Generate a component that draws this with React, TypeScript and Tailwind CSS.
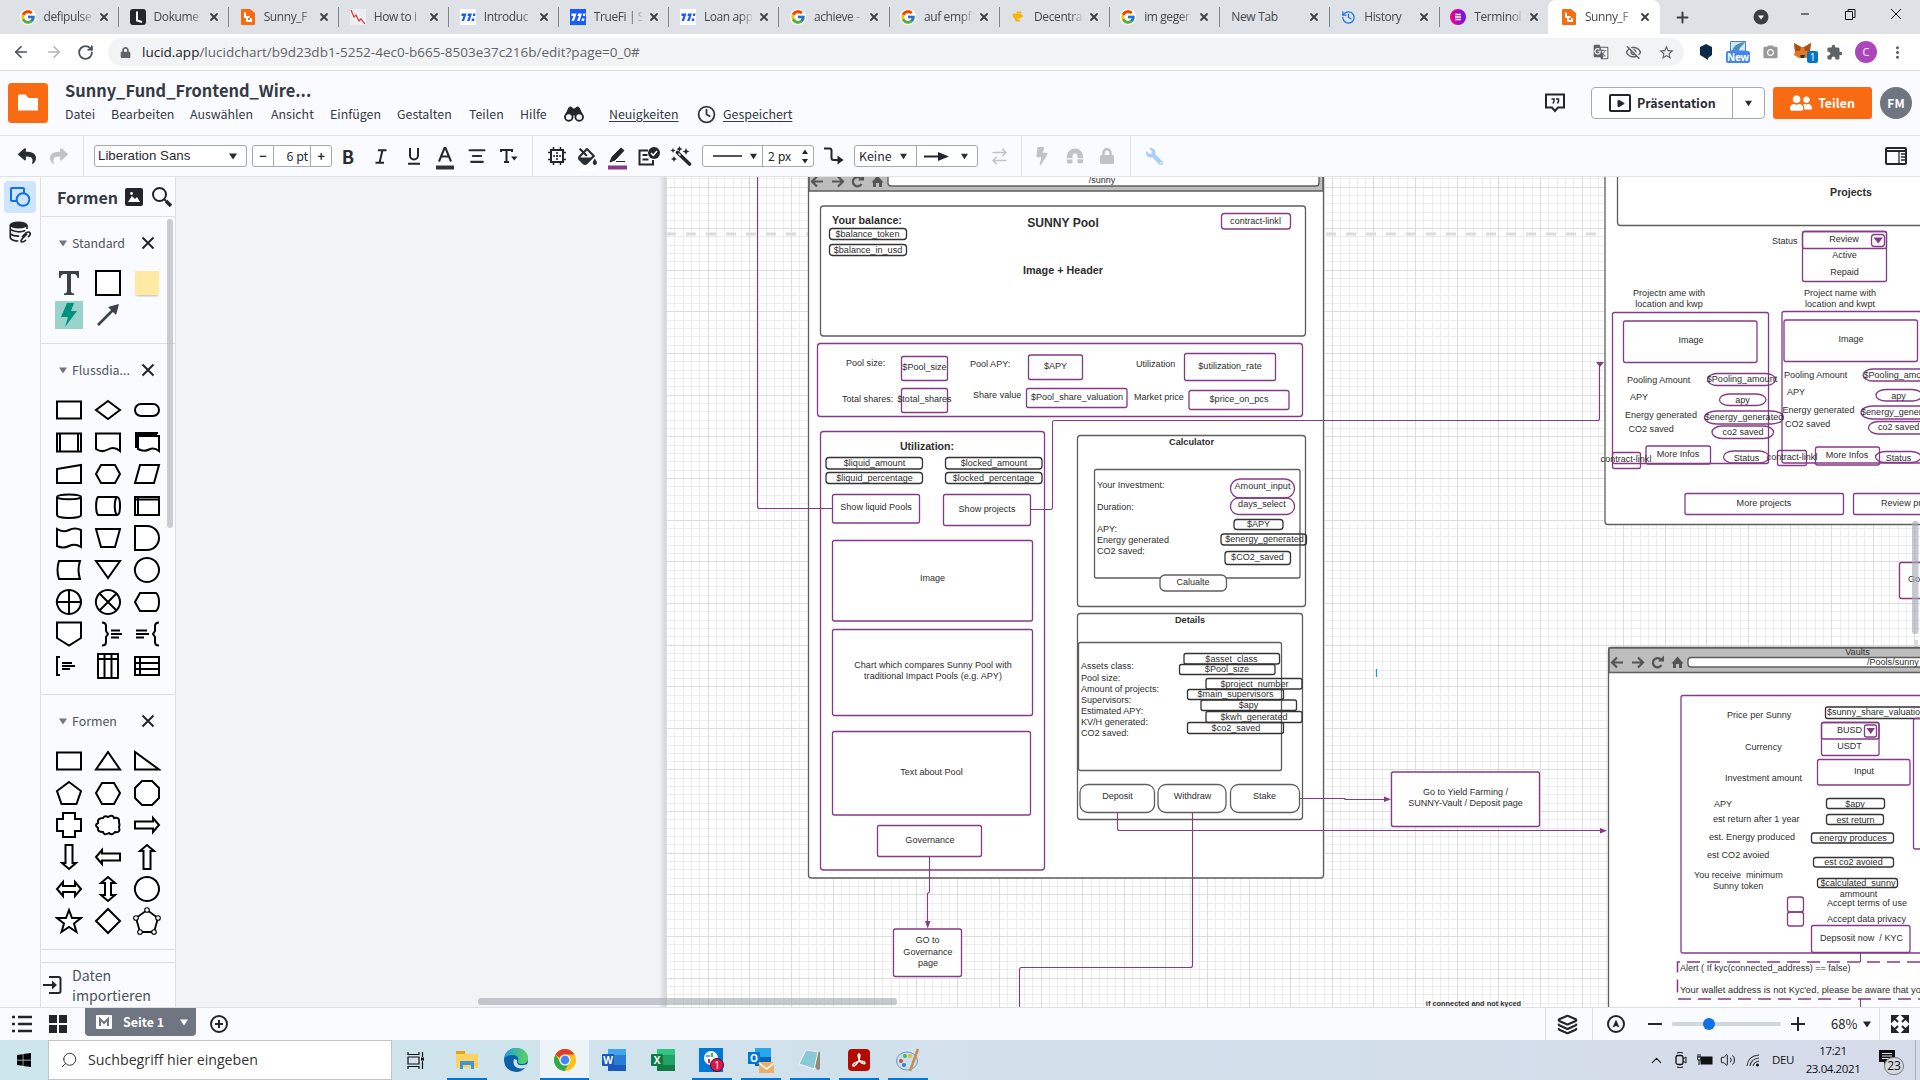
import React from "react";
import {
  FaBolt, FaLock, FaMagnet, FaWrench, FaReply, FaShare, FaFillDrip, FaUserFriends, FaWindows,
} from "react-icons/fa";
import { MdGTranslate, MdOutlineVisibilityOff, MdStarBorder, MdExtension, MdPhotoCamera, MdMoreVert } from "react-icons/md";
import { FcGoogle } from "react-icons/fc";
import {
  ArrowLeft, ArrowRight, RotateCw, History, Plus, X, Minus, Clock, AlignCenter, Layers, ArrowRightLeft,
  Search, ChevronUp, Volume2, Play,
} from "lucide-react";

const PURPLE = "#853a87";
const GRAY = "#5e5e5e";
const DARK = "#333333";

/* ---------- browser tabs ---------- */

const Lucid = () => (
  <svg width="14" height="16" viewBox="0 0 14 16"><path d="M1 0h8l5 4v11a1 1 0 0 1-1 1H1a1 1 0 0 1-1-1V1a1 1 0 0 1 1-1z" fill="#f96b13" /><path d="M4 3.500v4.500h4.500M6 8.500V12h4V9" fill="none" stroke="#fff" strokeWidth="2" /></svg>
);
const TrueFi = ({ dark }: { dark?: boolean }) => (
  <svg width="16" height="16" viewBox="0 0 16 16">
    <rect width="16" height="16" fill={dark ? "#1a5aff" : "#fff"} />
    <path d="M1.500 4.500h5L4 12H1.500L3.500 7H1.500zM8 4.500h4L9.500 12H7L9 7H7.500zM13 4.500h2.500L15 7h-2zM12 9.500h2.500l-.5 2.500h-2.500z" fill={dark ? "#fff" : "#1a5aff"} />
  </svg>
);
const Google = () => <FcGoogle size={16} className="rounded-full bg-white" />;
const tabs: { label: string; icon?: React.ReactNode }[] = [
  { label: "defipulse", icon: <Google /> },
  { label: "Dokume", icon: <svg width="16" height="16" viewBox="0 0 16 16"><rect width="16" height="16" rx="3" fill="#23262b" /><path d="M7 2.500v9l5 1.500" fill="none" stroke="#fff" strokeWidth="2" /></svg> },
  { label: "Sunny_F", icon: <Lucid /> },
  { label: "How to i", icon: <svg width="16" height="16" viewBox="0 0 16 16"><rect width="16" height="16" fill="#eceff1" /><path d="M1 1l3 7 2-2 3 6 2-2 4 5" fill="none" stroke="#d33" strokeWidth="1.200" /></svg> },
  { label: "Introduc", icon: <TrueFi /> },
  { label: "TrueFi | S", icon: <TrueFi dark /> },
  { label: "Loan app", icon: <TrueFi /> },
  { label: "achieve -", icon: <Google /> },
  { label: "auf empf", icon: <Google /> },
  { label: "Decentra", icon: <svg width="16" height="16" viewBox="0 0 16 16"><path d="M3 5h6l4 2-3 2H4zM5 9l5 3H6zM7 3h4v1H7z" fill="#f7b500" stroke="#f7b500" /></svg> },
  { label: "im geger", icon: <Google /> },
  { label: "New Tab" },
  { label: "History", icon: <History size={15} color="#1a73e8" /> },
  { label: "Terminol", icon: <svg width="16" height="16" viewBox="0 0 16 16"><defs><linearGradient id="tm"><stop offset="0" stopColor="#f0047f" /><stop offset="1" stopColor="#6a11f5" /></linearGradient></defs><circle cx="8" cy="8" r="8" fill="url(#tm)" /><path d="M5 5.500h6M5 8h6M5 10.500h6" stroke="#fff" strokeWidth="1.300" /></svg> },
];

const TabLabel = ({ text }: { text: string }) => (
  <span className="ml-2 w-[48px] whitespace-nowrap text-[12px] tracking-[-0.4px] text-[#45494d] [mask-image:linear-gradient(to_right,black_75%,transparent_105%)]">{text}</span>
);

function TabStrip() {
  return (
    <div className="flex h-[34px] bg-[#dee1e6] pl-[9px] font-['Open_Sans',sans-serif]">
      {tabs.map((t, i) => (
        <div key={i} className="flex w-[110.070px] shrink-0 items-center pl-[10.500px]">
          {t.icon ? <span className="flex w-4 justify-center">{t.icon}</span> : null}
          {t.icon ? <TabLabel text={t.label} /> : <span className="ml-[1px] w-[71px] text-[12px] tracking-[-0.3px] text-[#45494d]">{t.label}</span>}
          <X size={12} strokeWidth={3.600} className="ml-[6px] text-[#3c4043]" />
          {i < 13 && <span className="ml-auto h-5 w-px bg-[#80868b]" />}
        </div>
      ))}
      <div className="-ml-[2px] flex w-[112px] items-center rounded-t-lg bg-white pl-[13px]">
        <span className="flex w-4 justify-center"><Lucid /></span>
        <TabLabel text="Sunny_F" />
        <X size={12} strokeWidth={3.600} className="ml-[6px] text-[#3c4043]" />
      </div>
      <Plus size={17} strokeWidth={2.800} className="ml-[14px] self-center text-[#3c4043]" />
      <svg width="16" height="16" viewBox="0 0 16 16" className="ml-[62px] self-center"><circle cx="8" cy="8" r="7.500" fill="#3c4043" /><path d="M5 6.500h6l-3 4z" fill="#fff" /></svg>
      <div className="flex h-7 items-center">
        <Minus size={12} strokeWidth={2} className="ml-[30px]" />
        <svg width="11" height="11" viewBox="0 0 11 11" className="ml-[34px]"><path d="M.5 2.500h7v8h-7zM3 2.500v-2h7v8H8" fill="none" stroke="#111" /></svg>
        <svg width="12" height="12" viewBox="0 0 12 12" className="ml-[34px]"><path d="M1 1l10 10M11 1L1 11" stroke="#111" /></svg>
      </div>
    </div>
  );
}

function AddressBar() {
  return (
    <div className="flex h-[37px] items-center border-b border-[#dadce0] bg-white font-['Open_Sans',sans-serif]">
      <div className="flex w-[108px] items-center pl-3">
        <ArrowLeft size={18} strokeWidth={2.300} color="#4d5156" />
        <ArrowRight size={18} strokeWidth={2.300} color="#b4b6b9" className="ml-[15px]" />
        <RotateCw size={17} strokeWidth={2.600} color="#4d5156" className="ml-[14px]" />
      </div>
      <div className="flex h-7 w-[1576px] items-center rounded-full bg-[#f1f3f4]">
        <FaLock size={11} color="#5f6368" className="ml-3" />
        <span className="ml-[11px] w-[520px] whitespace-nowrap text-[13.500px] tracking-[0px] text-[#5f6368]"><span className="text-[#202124]">lucid.app</span>/lucidchart/b9d23db1-5252-4ec0-b665-8503e37c216b/edit?page=0_0#</span>
        <div className="ml-auto flex gap-4 pr-[9px] text-[#5f6368]">
          <MdGTranslate size={16} /><MdOutlineVisibilityOff size={17} /><MdStarBorder size={17} />
        </div>
      </div>
      <div className="flex h-9 flex-1 items-center">
        <svg width="14" height="17" viewBox="0 0 14 17" className="ml-[15px]"><path d="M7 0l6 3v8l-4 3v2l-3-2-5-3V3z" fill="#0a2b46" /></svg>
        <div className="ml-[13px] flex w-6 flex-col items-center">
          <svg width="16" height="10" viewBox="0 0 16 10"><path d="M.5 10V.5h15V10z" fill="#d7e8f2" stroke="#4488b5" /><path d="M2 10c2-6 6-8 13-9-2 4-5 4-6 9z" fill="#4a90be" /></svg>
          <span className="h-[12px] w-6 rounded-[2px] bg-[#4285f4] text-center text-[10px] font-bold leading-[12px] tracking-tight text-white">New</span>
        </div>
        <MdPhotoCamera size={17} color="#999" className="ml-[12px]" />
        <div className="relative ml-[15px] h-5 w-[18px]">
          <svg width="17" height="17" viewBox="0 0 17 17"><path d="M0 1l7 4h3l7-4-1 8 1 4-5 3H5l-5-3 1-4z" fill="#e27625" /><path d="M0 1l7 4-1 4-5 0zM17 1l-7 4 1 4 5 0z" fill="#a8511a" /><path d="M6 13h5l-1 3H7z" fill="#233447" /></svg>
          <span className="absolute -right-[6px] top-[9px] h-3 w-[11px] rounded-[2px] bg-[#0376c9] text-center text-[10px] leading-3 text-white">1</span>
        </div>
        <MdExtension size={17} color="#5f6368" className="ml-[14px]" />
        <span className="ml-[12px] flex size-[22px] items-center justify-center rounded-full bg-[#ab47bc] text-[11px] text-white">C</span>
        <MdMoreVert size={19} color="#5f6368" className="ml-[11px]" />
      </div>
    </div>
  );
}

/* ---------- application header ---------- */

const Caret = ({ className = "" }: { className?: string }) => (
  <svg width="9" height="7" viewBox="0 0 9 7" className={className}><path d="M0 0h9L4.500 7z" fill="currentColor" /></svg>
);

const Binoculars = () => (
  <svg width="20" height="16" viewBox="0 0 20 16" fill="none" stroke="#22262c">
    <path d="M2 8L5 1.500Q6 .5 8 1.500L9 3H11L12 1.500Q14 .5 15 1.500L18 8Q14 5 11.500 9H8.500Q6 5 2 8Z" fill="#22262c" strokeWidth="1" />
    <circle cx="4.800" cy="11" r="3.800" strokeWidth="1.900" /><circle cx="15.200" cy="11" r="3.800" strokeWidth="1.900" />
  </svg>
);

function Header() {
  return (
    <header className="flex h-[65px] items-center border-b border-[#dfe3e8] bg-[#fafbfe] text-[#282c33]">
      <svg width="40" height="40" viewBox="0 0 40 40" className="ml-2"><rect width="40" height="40" rx="3.500" fill="#f96b13" /><path d="M10 12.500a1 1 0 0 1 1-1h6.500l3 3.500H30v12.500H10z" fill="#fff" /></svg>
      <div className="ml-[17px] flex flex-col">
        <div className="h-[22px] whitespace-nowrap text-[16.400px] font-bold leading-[21px] text-[#333a44]">Sunny_Fund_Frontend_Wire...</div>
        <nav className="flex h-[24px] items-center text-[12.400px] leading-5 text-[#333a44]">
          <span className="w-[46px]">Datei</span><span className="w-[79px]">Bearbeiten</span><span className="w-[81px]">Auswählen</span>
          <span className="w-[59px]">Ansicht</span><span className="w-[67px]">Einfügen</span><span className="w-[72px]">Gestalten</span>
          <span className="w-[51px]">Teilen</span><span className="w-[44px]">Hilfe</span>
          <Binoculars />
          <span className="ml-[25px] w-[71px] underline underline-offset-2">Neuigkeiten</span>
          <Clock size={19} strokeWidth={2.300} className="ml-[17px]" />
          <span className="ml-[7px] underline underline-offset-2">Gespeichert</span>
        </nav>
      </div>
      <div className="ml-auto flex items-center">
        <svg width="22" height="20" viewBox="0 0 22 20"><path d="M2 1.500h18v13h-6L11 18l-3-3.500H2z" fill="none" stroke="#22262c" strokeWidth="2" /><path d="M7.500 6h2.500v2l-1 2.500M12 6h2.500v2l-1 2.500" fill="none" stroke="#22262c" strokeWidth="1.500" /></svg>
        <div className="ml-[25px] flex h-8 w-[174px] items-center rounded-[4px] border border-[#a3a9b5] bg-white">
          <span className="ml-[17px] flex h-[18px] w-[22px] items-center justify-center rounded-[2px] border-2 border-[#22262c]"><Play size={9} fill="#22262c" /></span>
          <span className="ml-[6px] w-[95px] text-[12.400px] font-bold leading-5">Präsentation</span>
          <span className="flex h-full flex-1 items-center justify-center border-l border-[#a3a9b5]"><Caret className="w-[7px]" /></span>
        </div>
        <div className="ml-2 flex h-8 w-[99px] items-center justify-center gap-[6px] rounded-[3px] bg-[#f96b13] text-[12.400px] font-bold leading-5 text-white"><FaUserFriends size={22} />Teilen</div>
        <div className="ml-2 mr-2 flex size-8 items-center justify-center rounded-full bg-[#6f7681] text-[12px] font-bold text-white">FM</div>
      </div>
    </header>
  );
}

const Cell = ({ children, className = "w-8" }: { children: React.ReactNode; className?: string }) => (
  <span className={"flex shrink-0 items-center justify-center " + className}>{children}</span>
);

function Toolbar() {
  return (
    <div className="flex h-[41px] items-center border-b border-[#dfe3e8] bg-[#fafbfe] text-[12.400px] leading-5 text-[#282c33]">
      <div className="flex h-full w-[84px] items-center border-r border-[#dfe3e8] pl-[11px]">
        <Cell><FaReply size={18} /></Cell><Cell><FaShare size={18} color="#bfc2c7" /></Cell>
      </div>
      <div className="ml-[10px] flex h-[22px] w-[153px] items-center justify-between rounded-[3px] border border-[#a3a9b5] bg-white pl-[3px] pr-[9px] font-['Liberation_Sans',Arial,sans-serif] text-[13.300px]">Liberation Sans<Caret className="w-2" /></div>
      <div className="ml-[5px] flex h-[22px] w-[80px] items-center rounded-[3px] border border-[#a3a9b5] bg-white">
        <span className="w-[20px] text-center font-bold">−</span>
        <span className="h-full w-[39px] border-x border-[#a3a9b5] pr-[2px] text-right leading-5">6 pt</span>
        <span className="w-[20px] text-center font-bold">+</span>
      </div>
      <Cell><span className="text-[18px] font-bold">B</span></Cell>
      <Cell className="w-[34px]"><svg width="12" height="15" viewBox="0 0 12 15"><path d="M3 1.200h8.500M.5 13.800H9M7.500 1L4.500 14" stroke="#22262c" strokeWidth="2" /></svg></Cell>
      <Cell className="w-[31px]"><svg width="12" height="17" viewBox="0 0 12 17"><path d="M2 0v7.500a4 4 0 0 0 8 0V0M0 15.700h12" fill="none" stroke="#22262c" strokeWidth="2" /></svg></Cell>
      <Cell><svg width="20" height="24" viewBox="0 0 20 24" className="mt-[3px]"><path d="M4 15.500L9.500 2h1L16 15.500M6 10.500h8" fill="none" stroke="#22262c" strokeWidth="2" /><path d="M1 19.500h18v4H1z" fill="#333" /></svg></Cell>
      <Cell><AlignCenter size={20} strokeWidth={2.500} /></Cell>
      <Cell><svg width="18" height="14" viewBox="0 0 18 14"><path d="M0 1h13M1 0v3M12 0v3M6.500 1v12M4 13h5" stroke="#22262c" strokeWidth="2" /><path d="M11 7.500h6.500l-3.200 4z" fill="#22262c" /></svg></Cell>
      <div className="ml-[7px] flex h-full items-center border-l border-[#dfe3e8] pl-[8px]">
        <Cell className="w-[31px]"><svg width="18" height="18" viewBox="0 0 18 18"><rect x="3" y="3" width="12" height="12" fill="none" stroke="#22262c" strokeWidth="2" /><path d="M5.500 2V0M12.500 2V0M5.500 18v-2M12.500 18v-2M2 5.500H0M2 12.500H0M18 5.500h-2M18 12.500h-2" stroke="#22262c" strokeWidth="1.500" /><path d="M5 9h8M9 5v8" stroke="#22262c" strokeWidth="1.500" strokeDasharray="2 1" /></svg></Cell>
        <Cell className="w-[30px]"><span className="flex flex-col items-center"><FaFillDrip size={19} className="mt-[6px]" /><span className="mt-[1px] h-[4px] w-[18px] bg-white" /></span></Cell>
        <Cell className="w-[30px]"><svg width="20" height="24" viewBox="0 0 20 24" className="mt-[3px]"><path d="M3 16l2-5L14 2l3 2.500L8 14zM9 15.500h9" fill="#22262c" stroke="#22262c" /><path d="M1 19.500h19v4H1z" fill={PURPLE} /></svg></Cell>
        <Cell className="w-[33px]"><svg width="22" height="19" viewBox="0 0 22 19"><path d="M10 3.500H1.500V17.500H15V13M4.500 8h5M4.500 12.500h6" fill="none" stroke="#22262c" strokeWidth="2" /><circle cx="16" cy="6" r="6" fill="#22262c" /><path d="M13 6l2.300 2.300L19 4" fill="none" stroke="#fff" strokeWidth="1.500" /></svg></Cell>
        <Cell className="w-[32px]"><svg width="22" height="20" viewBox="0 0 22 20"><path d="M7.500 6.500L19.500 18" stroke="#22262c" strokeWidth="3.600" strokeLinecap="round" /><path d="M8.500 7.500l2 2" stroke="#fafbfe" strokeWidth="1.200" /><path d="M9.500 0l.9 2.100 2.100.9-2.100.9L9.500 6l-.9-2.100L6.500 3l2.100-.9zM3 2l.8 1.700 1.700.8-1.700.8L3 7l-.8-1.700L.5 4.500l1.700-.8zM16 2l1 2.500 2.500 1-2.500 1-1 2.500-1-2.500-2.500-1 2.500-1zM4 10l.9 2.100 2.100.9-2.100.9L4 16l-.9-2.100L1 13l2.100-.9z" fill="#22262c" /></svg></Cell>
      </div>
      <div className="ml-[5px] flex h-[22px] w-[112px] items-center rounded-[3px] border border-[#a3a9b5] bg-white">
        <span className="flex w-[59px] items-center gap-3 pl-[10px]"><span className="h-[2px] w-[29px] bg-[#555]" /><Caret className="-ml-1 w-[7px] shrink-0" /></span>
        <span className="flex h-full flex-1 items-center justify-between border-l border-[#a3a9b5] px-[5px]">2 px<svg width="6" height="15" viewBox="0 0 6 15"><path d="M0 5l3-4.500L6 5zM0 10l3 4.500L6 10z" fill="#22262c" /></svg></span>
      </div>
      <Cell className="w-[40px]"><svg width="20" height="18" viewBox="0 0 20 18"><path d="M0 1.500h5.500q2 0 2 2V11q0 2 2 2H14" fill="none" stroke="#22262c" strokeWidth="2" /><path d="M13.500 8.500l6 4.500-6 4.500z" fill="#22262c" /></svg></Cell>
      <div className="flex h-[22px] w-[124px] items-center rounded-[3px] border border-[#a3a9b5] bg-white">
        <span className="flex w-[61px] items-center justify-between pl-[4px] pr-[9px]">Keine<Caret className="w-[7px]" /></span>
        <span className="flex h-full flex-1 items-center justify-between border-l border-[#a3a9b5] pl-[7px] pr-[9px]"><svg width="25" height="9" viewBox="0 0 25 9"><path d="M0 4.500h16" stroke="#22262c" strokeWidth="2" /><path d="M14 0l11 4.500L14 9z" fill="#22262c" /></svg><Caret className="w-[7px]" /></span>
      </div>
      <Cell className="w-[43px]"><ArrowRightLeft size={19} color="#bfc2c7" /></Cell>
      <div className="flex h-full w-[110px] items-center border-x border-[#dfe3e8] pl-1 text-[#bfc2c7]"><Cell><FaBolt size={18} /></Cell><Cell className="w-[33px]"><FaMagnet size={16} className="rotate-180" /></Cell><Cell><FaLock size={16} /></Cell></div>
      <Cell className="w-[46px]"><FaWrench size={17} color="#a9cdf8" className="-scale-x-100" /></Cell>
      <svg width="22" height="18" viewBox="0 0 22 18" className="ml-auto mr-[13px]"><rect x="1" y="1" width="20" height="16" rx="1" fill="none" stroke="#22262c" strokeWidth="2" /><path d="M1 4h20" stroke="#22262c" strokeWidth="2" /><path d="M14 4v13M16 7h4M16 10h4M16 13h4" stroke="#22262c" strokeWidth="1.300" /></svg>
    </div>
  );
}

/* ---------- shape library ---------- */

const flow = [
  "M2 5.500H26V22.500H2Z",
  "M14 5L26 14 14 23 2 14Z",
  "M8 8H20a6 6 0 0 1 0 12H8a6 6 0 0 1 0-12Z",
  "M2 5.500H26V23.500H2ZM5 5.500V23.500M23 5.500V23.500",
  "M2 5.500H26V23Q20 18 14 21.500T2 21Z",
  "M5 8H26V23Q21 19 16 21.500T5 21ZM2 5H25M3 4V20M2 6.500H24",
  "M2 9L26 5V23H2Z",
  "M7 5H21L26 14 21 23H7L2 14Z",
  "M7 5H26L21 23H2Z",
  "M2 5V23C2 27 26 27 26 23V5C26 1.500 2 1.500 2 5C2 8 26 8 26 5",
  "M4 5H23C27 5 27 23 23 23H4C1.500 20 1.500 8 4 5ZM23 5C20 8 20 20 23 23",
  "M2 5H26V23H2ZM2 7.500H26M5 5V23",
  "M2 5Q8 9 14 6T26 6V23Q20 19 14 22T2 22Z",
  "M2 5H26L21 23H7Z",
  "M2 2H14A12 12 0 0 1 14 26H2Z",
  "M4 5H25Q22 14 25 23H4Q1 14 4 5Z",
  "M2 5H26L14 22Z",
  "M14 2A12 12 0 1 1 13.900 2Z",
  "M14 2A12 12 0 1 1 13.900 2ZM14 2V26M2 14H26",
  "M14 2A12 12 0 1 1 13.900 2ZM5.500 5.500L22.500 22.500M22.500 5.500L5.500 22.500",
  "M7 5H23C27 8 27 20 23 23H7L2 14Z",
  "M2 2.500H26V18L14 25.500 2 18Z",
  "M8 2.500Q12 2.500 12 6V11L14 14 12 17V22Q12 25.500 8 25.500M17 10.500H26M17 14H28M17 17.500H25",
  "M26 2.500Q22 2.500 22 6V11L20 14 22 17V22Q22 25.500 26 25.500M3 10.500H14M3 14H16M3 17.500H11",
  "M5 5H2V23H5M7 11H17M7 14H20M7 17H15",
  "M4 2H24V26H4ZM4 7H24M10.500 2V26M17.500 2V26",
  "M2 5H26V23H2ZM7 5V23M2 11H26M2 17H26",
];
const basic = [
  "M2 5.500H26V22.500H2Z", "M14 5L26 22.500H2Z", "M2 5V22.500H26Z",
  "M14 3L26 12 21.500 25H6.500L2 12Z", "M8 4H20L26 14 20 25H8L2 14Z", "M9 2H19L26 9V19L19 26H9L2 19V9Z",
  "M8 2H20V8H26V20H20V26H8V20H2V8H8Z",
  "M9 7Q11 4 14 6Q19 3 20 7Q26 6 25 11Q26 14 25 16Q27 22 21 21Q18 25 15 22Q10 25 9 21Q3 21 4 17Q0 14 4 12Q3 7 9 7Z",
  "M2 10.500H20V7L26 14 20 21V17.500H2Z", "M10.500 2V20H7L14 26 21 20H17.500V2Z", "M26 10.500H8V7L2 14 8 21V17.500H26Z",
  "M10.500 26V8H7L14 2 21 8H17.500V26Z", "M8 11H20V7L26 14 20 21V17H8V21L2 14 8 7Z", "M11 8V20H7L14 26 21 20H17V8H21L14 2 7 8Z",
  "M14 2A12 12 0 1 1 13.900 2Z", "M14 3L17 11H26L19 16.500 21.500 25 14 20 6.500 25 9 16.500 2 11H11Z",
  "M14 2L26 14 14 26 2 14Z", "",
];

const Shape = ({ d }: { d: string }) => (
  <svg width="28" height="28" viewBox="0 0 28 28" fill="#fff" stroke="#000" strokeWidth="2">
    {d ? <path d={d} /> : (
      <g strokeWidth="1.800"><path d="M14 3L25 11 21 25H7L3 11Z" />
        {[[14, 3], [25, 11], [21, 25], [7, 25], [3, 11]].map(([x, y]) => <circle key={x} cx={x} cy={y} r="2.300" strokeWidth="1.100" />)}</g>
    )}
  </svg>
);

const Section = ({ title, children, className }: { title: string; children: React.ReactNode; className: string }) => (
  <section className={"border-b border-[#dcdfe5] " + className}>
    <div className="flex h-5 items-center pl-[18px] text-[12.400px] leading-5 text-[#4c535d]">
      <Caret className="mr-[5px] w-2 text-[#6f7681]" /><span className="w-[66px]">{title}</span>
      <svg width="14" height="14" viewBox="0 0 14 14" className="ml-[3px]"><path d="M1.500 1.500l11 11M12.500 1.500l-11 11" stroke="#22262c" strokeWidth="2" /></svg>
    </div>
    {children}
  </section>
);

function Sidebar() {
  return (
    <>
      <div className="flex w-[41px] shrink-0 flex-col items-center border-r border-[#dcdfe5] bg-[#fafbfe] pt-1">
        <span className="flex size-8 items-center justify-center rounded-[4px] bg-[#cfe4ff]"><svg width="22" height="20" viewBox="0 0 22 20"><rect x="2" y="1" width="13" height="13" rx="1" fill="none" stroke="#1071e5" strokeWidth="2" /><circle cx="14" cy="12.500" r="6.300" fill="#cfe4ff" stroke="#1071e5" strokeWidth="2" /></svg></span>
        <svg width="23" height="22" viewBox="0 0 23 22" className="mt-2"><ellipse cx="9.500" cy="4" rx="9" ry="3.500" fill="#22262c" /><path d="M1.300 4v13q2 3 8 3M18 4v4M1.300 8.500q8 4 15 1M1.300 13q4 2.500 9 2" fill="none" stroke="#22262c" strokeWidth="1.700" /><path d="M13 16l4-4q3-2 4 0t-2 4M18 13l-5 5q-2 3 0 3t4-2" fill="none" stroke="#22262c" strokeWidth="1.700" /></svg>
      </div>
      <aside className="relative flex w-[135px] shrink-0 flex-col border-r border-[#dcdfe5] bg-[#fafbfe]">
        <div className="flex h-[40px] items-center border-b border-[#dcdfe5] pl-[16px]">
          <span className="w-[68px] text-[16px] font-bold leading-6 text-[#333a44]">Formen</span>
          <svg width="18" height="18" viewBox="0 0 18 18"><rect x="1" y="1" width="16" height="16" rx="1" fill="#22262c" stroke="#22262c" strokeWidth="2" /><path d="M3 14l4-6 3 3 2-2 3 5z" fill="#fff" /><circle cx="6.500" cy="5.500" r="1.400" fill="#fff" /></svg>
          <svg width="20" height="20" viewBox="0 0 20 20" className="ml-[9px]"><circle cx="7.500" cy="7.500" r="6.500" fill="none" stroke="#22262c" strokeWidth="2" /><path d="M12 12l2 2" stroke="#22262c" strokeWidth="2" /><path d="M14 14l5 5" stroke="#22262c" strokeWidth="3.400" /></svg>
        </div>
        <Section title="Standard" className="h-[127px] pt-[16px]">
          <div className="ml-[8px] mt-[15px] grid w-[117px] grid-cols-3 justify-items-center pl-0">
            <span className="flex h-[30px] items-center"><svg width="20" height="24" viewBox="0 0 20 24"><path d="M0 0h20v7h-1.500q-.5-4-4-4H12v17q0 2 3 2.500V24H5v-1.500Q8 22 8 20V3H5.500q-3.500 0-4 4H0z" fill="#3a414a" /></svg></span>
            <span className="h-[26px] w-[26px] self-center border-2 border-black bg-white" />
            <span className="size-6 self-center bg-[#ffeaa3] shadow-[0_2px_2px_-1px_#bbb]" />
            <span className="mt-[3px] flex size-7 items-center justify-center bg-[#9ad3cb]"><svg width="18" height="24" viewBox="0 0 18 24"><path d="M7 0h7l-3 8h6L5 24l3-10H1z" fill="#00907f" /></svg></span>
            <span className="mt-[3px] flex size-7 items-center justify-center"><svg width="24" height="24" viewBox="0 0 24 24"><path d="M2 22L17 7" stroke="#3a414a" strokeWidth="2.600" /><path d="M23 1l-3 11-8-8z" fill="#3a414a" /></svg></span>
          </div>
        </Section>
        <Section title="Flussdia..." className="h-[351px] pt-[16px]">
          <div className="ml-[8px] mt-[16px] grid w-[117px] grid-cols-3 justify-items-center gap-y-1">{flow.map((d, i) => <Shape key={i} d={d} />)}</div>
        </Section>
        <Section title="Formen" className="h-[255px] pt-[16px]">
          <div className="ml-[8px] mt-[16px] grid w-[117px] grid-cols-3 justify-items-center gap-y-1">{basic.map((d, i) => <Shape key={i} d={d} />)}</div>
        </Section>
        <div className="h-[13px] shrink-0 border-b border-[#dcdfe5]" />
        <div className="flex flex-1 items-center text-[14.200px] leading-[20px] text-[#4c535d]">
          <svg width="19" height="18" viewBox="0 0 19 18" className="ml-[2px] shrink-0"><path d="M6 1h9.500q2 0 2 2v12q0 2-2 2H6M0 9h11" fill="none" stroke="#22262c" strokeWidth="2" /><path d="M9 4.500l5 4.500-5 4.500z" fill="#22262c" /></svg>
          <span className="ml-[10px]">Daten<br />importieren</span>
        </div>
        <span className="absolute right-[2px] top-[42px] h-[309px] w-[6px] rounded-full bg-[#aaacb9]/60" />
      </aside>
    </>
  );
}

/* ---------- diagram canvas ---------- */

/* [x1, y1, x2, y2, colour, radius, filled] */
type Box = [number, number, number, number, string, number?, boolean?];
const P = PURPLE, G = GRAY, K = DARK;
const boxes: Box[] = [
  [808.5, 160, 1323.5, 878, G, 3, true],
  [820.5, 206, 1305.5, 336, G, 3, true],
  [829.5, 228.500, 906.5, 239.500, K, 3], [829.5, 244.500, 906.5, 255.500, K, 3],
  [1221.5, 213.500, 1290.5, 229, P, 3],
  [817.5, 343.500, 1302.5, 416.500, P, 3, true],
  [901.5, 356.500, 947.5, 380.500, P, 2], [1028.5, 355, 1082.5, 379.500, P, 2], [1184.5, 353.500, 1275.5, 380.500, P, 2],
  [901.5, 388.500, 947.5, 412.500, P, 2], [1026.5, 388.500, 1127, 407.500, P, 2], [1189, 390.500, 1289, 409.500, P, 2],
  [820.5, 431.500, 1044.5, 870, P, 3],
  [826, 457.500, 922.500, 469, K, 3], [826, 472.500, 922.500, 483.500, K, 3], [945.5, 457.500, 1042, 469, K, 3], [945.5, 472.500, 1042, 483.500, K, 3],
  [832.5, 494.500, 919.5, 523, P, 2], [943.5, 494.500, 1030.5, 525.500, P, 2],
  [832.5, 540.500, 1032.500, 621, P, 2], [832.5, 629.500, 1032.500, 715.500, P, 2], [832.5, 731.500, 1030.500, 815, P, 2], [877.5, 825.500, 981.500, 856.500, P, 2],
  [1077.5, 435.500, 1305.5, 606.500, G, 3], [1094.5, 469.500, 1300, 578, G, 2],
  [1230.5, 479, 1294.5, 498, P, 9.5], [1230.5, 498, 1294.5, 514.500, P, 8],
  [1234, 519.500, 1283, 529.500, K, 3], [1221, 534, 1306.500, 545, K, 3], [1225, 551.500, 1290.500, 564.500, K, 3],
  [1160, 575, 1226.500, 591, G, 5, true],
  [1077.5, 613.500, 1302.5, 819.500, G, 3], [1078.5, 642.500, 1281.500, 770.500, G, 2],
  [1184, 653.500, 1279.500, 664, K, 2], [1179.5, 664.500, 1275, 674.500, K, 2], [1206, 678.500, 1302, 689, K, 2], [1187.5, 689.500, 1283.500, 699.500, K, 2],
  [1201, 700, 1296.500, 710.500, K, 2], [1206, 711.500, 1302, 722.500, K, 2], [1187.5, 722.500, 1283.500, 733.500, K, 2],
  [1080, 784.500, 1154.500, 812.500, G, 8], [1158, 784.500, 1226, 812.500, G, 8], [1230.500, 784.500, 1299.500, 812.500, G, 8],
  [893.5, 929, 961.500, 976.500, P, 2, true], [1391.5, 772, 1539.500, 826.500, P, 2, true],
  [1605, 160, 1940, 524.500, G, 3, true], [1617.5, 160, 1940, 225.500, G, 3],
  [1802.5, 231.500, 1886.500, 281.500, P, 2], [1802.5, 231.500, 1886.500, 248.500, P, 2], [1871.5, 234.500, 1884.500, 246.500, P, 3],
  [1612.5, 312.500, 1768.500, 463.500, P, 2], [1623.500, 321, 1757, 362.500, P, 2], [1782, 311.500, 1960, 463, P, 2], [1784, 320, 1917.500, 361.500, P, 2],
  [1707.5, 373.500, 1775.500, 385.500, P, 10], [1719.500, 394, 1766, 405.500, P, 10], [1704.5, 411, 1783.500, 424, P, 12], [1712, 426, 1773.500, 438.500, P, 10],
  [1723.5, 451, 1769, 463, P, 10], [1612.5, 452.500, 1640.500, 468.500, P, 2], [1646, 446, 1710.500, 464, P, 2],
  [1863, 369, 1931, 381, P, 10], [1876, 389.500, 1922, 401, P, 10], [1861, 406, 1940, 419, P, 12], [1868.5, 421.500, 1930, 434, P, 10],
  [1875.500, 451.500, 1921, 462.500, P, 10], [1777.500, 450.500, 1806.500, 465.500, P, 2], [1815.500, 447, 1879.500, 465, P, 2],
  [1685, 493.500, 1843.500, 514.500, P, 2], [1853.500, 493.500, 1960, 514.500, P, 2],
  [1899.500, 562.500, 1960, 598.500, P, 2, true],
  [1608.500, 647.500, 1960, 1040, G, 3, true],
  [1681, 695.500, 1960, 953, P, 2], [1825.500, 707, 1960, 718.500, K, 2], [1913.500, 718.500, 1960, 849, P, 2],
  [1821.500, 722.500, 1879, 755.500, P, 2], [1821.500, 722.500, 1879, 739, P, 2], [1864.500, 725, 1876.500, 737, P, 2],
  [1817.500, 759.500, 1910, 785, P, 2],
  [1826.500, 798.500, 1884.500, 808.500, K, 2.5], [1826.500, 814.500, 1883.500, 824.500, K, 2.5], [1811.500, 833, 1893.500, 843, K, 2.5],
  [1813.500, 857.500, 1893.500, 867, K, 2.5], [1817.500, 878.500, 1897.500, 887.500, K, 2.5],
  [1787.500, 897, 1803.500, 912, P, 2.5], [1787.500, 912, 1803.500, 926, P, 2.5], [1811.500, 925.500, 1910, 952.500, P, 2],
];

/* [text, x, y, anchor, size, bold] */
type Label = [string, number, number, ("s" | "m")?, number?, boolean?];
const labels: Label[] = [
  ["/sunny", 1102, 180.500, "m"], ["Your balance:", 867, 221, "m", 10.7, true], ["SUNNY Pool", 1063, 223, "m", 12.1, true], ["Image + Header", 1063, 271, "m", 10.8, true],
  ["$balance_token", 867.500, 234.500, "m"], ["$balance_in_usd", 868, 250.500, "m"], ["contract-linkl", 1255.5, 221.500, "m"],
  ["Pool size:", 846, 363.500], ["$Pool_size", 924.500, 367.500, "m"], ["Pool APY:", 970, 364.500], ["$APY", 1055.500, 366.500, "m"], ["Utilization", 1136, 364.500], ["$utilization_rate", 1230, 366.500, "m"],
  ["Total shares:", 842, 399.500], ["$total_shares", 924.500, 399.500, "m"], ["Share value", 973, 395.500], ["$Pool_share_valuation", 1077, 397.500, "m"], ["Market price", 1134, 397.500], ["$price_on_pcs", 1239, 399.500, "m"],
  ["Utilization:", 927, 447, "m", 10.6, true], ["$liquid_amount", 874.500, 463.500, "m"], ["$liquid_percentage", 874.500, 478.500, "m"], ["$locked_amount", 994, 463.500, "m"], ["$locked_percentage", 993.500, 478.500, "m"],
  ["Show liquid Pools", 876, 507.500, "m"], ["Show projects", 987, 509.500, "m"], ["Image", 932.500, 578.500, "m"],
  ["Chart which compares Sunny Pool with", 933, 665.500, "m"], ["traditional Impact Pools (e.g. APY)", 933, 676.500, "m"], ["Text about Pool", 931.500, 772.500, "m"], ["Governance", 930, 840.500, "m"],
  ["GO to", 927.500, 940.500, "m"], ["Governance", 928, 952.500, "m"], ["page", 928, 963.500, "m"],
  ["Calculator", 1191.500, 442.500, "m", 9.2, true], ["Your Investment:", 1097, 485.500], ["Duration:", 1097, 507.500], ["APY:", 1097, 529.500], ["Energy generated", 1097, 540.500], ["CO2 saved:", 1097, 551.500],
  ["Amount_input", 1262.500, 486.500, "m"], ["days_select", 1262, 504.500, "m"], ["$APY", 1258.500, 525, "m"], ["$energy_generated", 1264.500, 539.500, "m"], ["$CO2_saved", 1257.500, 557.500, "m"], ["Calualte", 1193, 582.500, "m"],
  ["Details", 1190, 620.500, "m", 9.2, true], ["Assets class:", 1081, 666.500], ["Pool size:", 1081, 678.500], ["Amount of projects:", 1081, 689.500], ["Supervisors:", 1081, 700.500], ["Estimated APY:", 1081, 711.500], ["KV/H generated:", 1081, 722.500], ["CO2 saved:", 1081, 733.500],
  ["$asset_class", 1231.500, 659.500, "m"], ["$Pool_size", 1227, 669.500, "m"], ["$project_number", 1254.500, 684.500, "m"], ["$main_supervisors", 1235.500, 694.500, "m"], ["$apy", 1248.500, 705.500, "m"], ["$kwh_generated", 1254, 717.500, "m"], ["$co2_saved", 1236, 728.500, "m"],
  ["Deposit", 1117.500, 796.500, "m"], ["Withdraw", 1192.500, 796.500, "m"], ["Stake", 1264.500, 796.500, "m"],
  ["Go to Yield Farming /", 1465.500, 792.500, "m"], ["SUNNY-Vault / Deposit page", 1465.500, 803.500, "m"], ["if connected and not kyced", 1473.500, 1004.500, "m", 7.4, true],
  ["Projects", 1851, 193, "m", 10.6, true], ["Status", 1772, 241.500], ["Review", 1844, 239.500, "m"], ["Active", 1844.500, 255.500, "m"], ["Repaid", 1844.500, 272.500, "m"],
  ["Projectn ame with", 1669, 293.500, "m"], ["location and kwp", 1669, 304.500, "m"], ["Project name with", 1840, 293.500, "m"], ["location and kwpt", 1840, 304.500, "m"],
  ["Image", 1691, 340.500, "m"], ["Image", 1851, 339.500, "m"],
  ["Pooling Amount", 1627, 380.500], ["APY", 1630, 397.500], ["Energy generated", 1625, 415.500], ["CO2 saved", 1628.5, 429.500],
  ["$Pooling_amount", 1742, 379.500, "m"], ["apy", 1742.500, 400.500, "m"], ["$energy_generated", 1744, 417.500, "m"], ["co2 saved", 1743, 432.500, "m"], ["Status", 1746.500, 458.500, "m"], ["contract-linkl", 1626, 459.500, "m"], ["More Infos", 1678, 454.500, "m"],
  ["Pooling Amount", 1784, 375.500], ["APY", 1787, 392.500], ["Energy generated", 1782.500, 410.500], ["CO2 saved", 1785, 424.500],
  ["$Pooling_amount", 1863.500, 375.500], ["apy", 1898.500, 396.500, "m"], ["$energy_generated", 1861, 412.500], ["co2 saved", 1878, 427.500], ["Status", 1898.500, 458.500, "m"], ["contract-linkl", 1792, 457.500, "m"], ["More Infos", 1847, 455.500, "m"],
  ["More projects", 1764, 503.500, "m"], ["Review projects", 1881, 503.500], ["Go to", 1908, 579.500],
  ["Vaults", 1857.500, 652.500, "m"], ["/Pools/sunny", 1867, 662.500],
  ["Price per Sunny", 1727, 715.500], ["$sunny_share_valuation", 1827, 712.500], ["BUSD", 1849.500, 730.500, "m"], ["USDT", 1849.500, 746.500, "m"], ["Currency", 1745, 747.500], ["Input", 1864, 771.500, "m"], ["Investment amount", 1725, 778.500],
  ["APY", 1714, 804.500], ["$apy", 1855, 804.500, "m"], ["est return after 1 year", 1713, 819.500], ["est return", 1855.500, 820.500, "m"], ["est. Energy produced", 1709, 837.500], ["energy produces", 1853, 838.500, "m"],
  ["est CO2 avoied", 1707, 855.500], ["est co2 avoied", 1853.500, 862.500, "m"], ["You receive\u00a0 minimum", 1694, 875.500], ["Sunny token", 1713, 886.500], ["$calculated_sunny", 1858, 883.500, "m"], ["ammount", 1858.500, 894.500, "m"],
  ["Accept terms of use", 1827, 903.500], ["Accept data privacy", 1827, 919.500], ["Depsosit now\u00a0 / KYC", 1861.500, 938.500, "m"],
  ["Alert ( If kyc(connected_address) == false)", 1680, 968.500], ["Your wallet address is not Kyc'ed, please be aware that you", 1680, 990.500, "s", 9.35],
];

const NavIcons = ({ x, y }: { x: number; y: number }) => (
  <g transform={`translate(${x} ${y})`} stroke="#555" strokeWidth="2.200" fill="none">
    <path d="M6 0H-4.500M0-5L-5 0 0 5M15 0H25.500M21-5L26 0 21 5" />
    <path d="M44.500 2.500A4.600 4.600 0 1 1 43.500-3.300" /><path d="M41-1h6v-6z" fill="#555" stroke="none" />
    <path d="M54.500 1L60.500-6 66.500 1H65V5.500H62V1.500H59V5.500H56V1Z" fill="#555" stroke="none" />
  </g>
);

function Canvas() {
  const xs = Array.from({ length: 151 }, (_, i) => 666.1 + i * 8.322);
  const ys = Array.from({ length: 101 }, (_, i) => 178.200 + i * 8.328);
  return (
    <div className="relative flex-1 overflow-hidden bg-[#f2f3f5]">
      <svg width="1744" height="830" viewBox="176 177 1744 830" className="block font-['Liberation_Sans',Arial,sans-serif]" fill="none">
        <defs><linearGradient id="edge"><stop offset="0" stopColor="#f2f3f5" /><stop offset="1" stopColor="#d3d4d7" /></linearGradient></defs>
        <rect x="659" y="177" width="7" height="830" fill="url(#edge)" />
        <rect x="666" y="177" width="1254" height="830" fill="#fff" />
        <g shapeRendering="crispEdges">
          {xs.map((x, i) => i % 5 ? <rect key={x} x={Math.round(x)} y="177" width="1" height="830" fill="#ededed" /> : null)}
          {ys.map((y, i) => i % 5 !== 1 ? <rect key={y} x="666" y={Math.round(y)} width="1254" height="1" fill="#ededed" /> : null)}
          {xs.map((x, i) => i % 5 ? null : <rect key={x} x={Math.round(x)} y="177" width="1" height="830" fill="#dcdcdc" />)}
          {ys.map((y, i) => i % 5 !== 1 ? null : <rect key={y} x="666" y={Math.round(y)} width="1254" height="1" fill="#dcdcdc" />)}
        </g>
        <path d="M666 234H1604" stroke="#dcdcdc" strokeWidth="3" strokeDasharray="10 10" />
        <path d="M1916.500 640V647" stroke="#dcdcdc" strokeWidth="3" />
        {boxes.map(([x1, y1, x2, y2, c, r, f], i) => (
          <g key={i}>
            <rect x={x1} y={y1} width={x2 - x1} height={y2 - y1} rx={r} ry={Math.min(r ?? 0, (y2 - y1) / 2)} stroke={c} strokeWidth="1.300" fill={f ? "#fff" : "none"} />
            {i === 0 && <g><path d="M809 160H1323V191H809Z" fill="#bdbdbd" stroke={G} strokeWidth="1.500" /><rect x="888" y="165" width="431" height="21" rx="3" fill="#fff" stroke={G} strokeWidth="1.400" /><NavIcons x={817} y={181.5} /></g>}
            {x1 === 1608.5 && <g><path d="M1609 648H1940V672.500H1609Z" fill="#bdbdbd" stroke={G} strokeWidth="1.500" /><rect x="1688" y="657.500" width="300" height="9.500" rx="3" fill="#fff" stroke={G} strokeWidth="1.400" /><NavIcons x={1617} y={662.5} /></g>}
          </g>
        ))}
        <g stroke={P} strokeWidth="1.100">
          <path d="M757.500 177V506.500Q757.500 508.500 759.500 508.500H832.500" />
          <path d="M1031 509.500H1050.500Q1052.500 509.500 1052.500 507.500V422.500Q1052.500 420.500 1054.500 420.500H1597.500Q1599.500 420.500 1599.500 418.500V364" />
          <path d="M929.500 857V892L927.500 893.500V922" />
          <path d="M1117.500 812.500V828.500Q1117.500 830.500 1119.500 830.500H1602" />
          <path d="M1192.500 812.500V965.500Q1192.500 967.500 1190.500 967.500H1021.500Q1019.500 967.500 1019.500 969.500V1007" />
          <path d="M1299.500 798.500H1345V799.500H1386" />
          <path d="M1860.500 953V962M1860.500 999V1007" />
          <path d="M1960 962H1677.500V999H1960" strokeWidth="1.500" strokeDasharray="13 7" />
        </g>
        <g fill={P}>
          <path d="M1596 362H1604L1600 367ZM925 921H930.500L927.700 928.500ZM1600 828L1607 830.700 1600 833.500ZM1384 796.500L1391 799.300 1384 802Z" />
          <path d="M1873.500 237.500H1883L1878.200 243.500ZM1866.500 728H1875L1870.700 734Z" />
        </g>
        <path d="M1376.500 669V677" stroke="#1b98e0" strokeWidth="1.300" />
        <g fill="#2e2e2e">
          {labels.map(([t, x, y, a, s = 9.05, b], i) => (
            <text key={i} x={x} y={y + s * 0.34 - 0.6} fontSize={s} fontWeight={b ? 700 : 400} textAnchor={a === "m" ? "middle" : "start"}>{t}</text>
          ))}
        </g>
        <rect x="478" y="998" width="419" height="7" rx="3" fill="#a9acb8" fillOpacity="0.650" />
        <rect x="1912" y="521" width="6.500" height="113" rx="3" fill="#a9acb8" fillOpacity="0.650" />
      </svg>
    </div>
  );
}

/* ---------- bottom bars ---------- */

function PageBar() {
  return (
    <div className="flex h-[33px] shrink-0 items-center border-t border-[#dcdfe5] bg-[#fafbfe] leading-5 text-[#22262c]">
      <svg width="20" height="18" viewBox="0 0 20 18" className="ml-3"><path d="M0 2h3M0 9h3M0 16h3M6 2h14M6 9h14M6 16h14" stroke="#22262c" strokeWidth="2.600" /></svg>
      <svg width="18" height="18" viewBox="0 0 18 18" className="ml-[17px]"><path d="M0 0h8v8H0zM10 0h8v8h-8zM0 10h8v8H0zM10 10h8v8h-8z" fill="#22262c" /></svg>
      <div className="ml-[18px] flex h-7 w-[111px] items-center self-start rounded-b-[4px] bg-[#6f7681] font-bold text-white">
        <svg width="16" height="14" viewBox="0 0 16 14" className="ml-[11px]"><rect width="16" height="14" rx="1" fill="#fff" /><path d="M4 11V4l4 4 4-4v7" fill="none" stroke="#6f7681" strokeWidth="2" /></svg>
        <span className="ml-[11px] text-[12.400px]">Seite 1</span>
        <Caret className="ml-auto mr-2 w-2" />
      </div>
      <svg width="18" height="18" viewBox="0 0 18 18" className="ml-[14px]"><circle cx="9" cy="9" r="8" fill="none" stroke="#22262c" strokeWidth="2" /><path d="M9 5v8M5 9h8" stroke="#22262c" strokeWidth="2" /></svg>
      <div className="ml-auto flex h-full items-center">
        <Cell className="h-full w-[47px] border-l border-[#dcdfe5]"><Layers size={21} strokeWidth={2.500} className="-ml-[3px]" /></Cell>
        <Cell className="h-full w-[47px] border-l border-[#dcdfe5]"><svg width="18" height="18" viewBox="0 0 18 18"><circle cx="9" cy="9" r="8" fill="none" stroke="#22262c" strokeWidth="2" /><path d="M9 4.500l3.500 8L9 11l-3.500 1.500z" fill="#22262c" /></svg></Cell>
        <span className="ml-[9px] h-[2px] w-[14px] bg-[#22262c]" />
        <span className="relative ml-[10px] h-1 w-[109px] rounded-full bg-[#cfd6de]"><span className="absolute -top-[4px] left-[31px] size-3 rounded-full bg-[#1071e5]" /></span>
        <svg width="14" height="14" viewBox="0 0 14 14" className="ml-[10px]"><path d="M0 7h14M7 0v14" stroke="#22262c" strokeWidth="2" /></svg>
        <span className="ml-[26px] w-[32px] text-[13px]">68%</span>
        <Caret className="w-2" />
        <Cell className="ml-[8px] h-full w-[41px] border-l border-[#dcdfe5]"><svg width="18" height="18" viewBox="0 0 18 18"><path d="M1 6V1h5zM12 1h5v5zM1 12v5h5zM17 12v5h-5zM3 3l4 4M15 3l-4 4M3 15l4-4M15 15l-4-4" fill="#22262c" stroke="#22262c" strokeWidth="2" /></svg></Cell>
      </div>
    </div>
  );
}

const Office = ({ letter, dark, mid, light }: { letter: string; dark: string; mid: string; light: string }) => (
  <svg width="24" height="22" viewBox="0 0 24 22"><rect x="6" width="18" height="22" rx="1" fill={mid} /><rect x="6" width="18" height="6" fill={light} /><rect x="6" y="16" width="18" height="6" fill={dark} /><rect y="5" width="12" height="12" rx="1" fill={dark} /><text x="6" y="14.500" textAnchor="middle" fontSize="10" fontWeight="700" fill="#fff">{letter}</text></svg>
);

const apps: { icon: React.ReactNode; run?: boolean; active?: boolean }[] = [
  { run: true, icon: <svg width="22" height="18" viewBox="0 0 22 18"><path d="M0 1h9l2 2h11v14H0z" fill="#ffd25e" /><path d="M0 0h9v3H0z" fill="#e3a512" /><path d="M4 10h14v8h-3v-4H7v4H4z" fill="#3a96dd" /></svg> },
  { icon: <svg width="24" height="24" viewBox="0 0 24 24"><defs><linearGradient id="edg" x2="1"><stop offset="0" stopColor="#1b9de2" /><stop offset="1" stopColor="#5bd65b" /></linearGradient></defs><circle cx="12" cy="12" r="12" fill="#0c5fab" /><path d="M0 11C1 4 6 0 12 0c8 0 12 5 12 10 0 4-3 6-6 6-4 0-5-2-4-4 1-3-2-5-6-5-4 0-7 2-8 4z" fill="url(#edg)" /><path d="M10 11c-2 6 2 11 11 9l3-4-4 1c-5 1-8-1-7-5z" fill="#cfe6ee" /></svg> },
  { run: true, active: true, icon: <svg width="22" height="22" viewBox="0 0 22 22"><circle cx="11" cy="11" r="11" fill="#fbc116" /><path d="M1.500 5.500A11 11 0 0 1 20.500 5.500H11a5.500 5.500 0 0 0-5 3.500z" fill="#e33b2e" /><path d="M1.500 5.500A11 11 0 0 0 10.500 22L15 14 6.200 13.500z" fill="#2da94f" /><circle cx="11" cy="11" r="5" fill="#4285f4" stroke="#fff" strokeWidth="1.200" /></svg> },
  { icon: <Office letter="W" dark="#185abd" mid="#2b7cd3" light="#41a5ee" /> },
  { icon: <Office letter="X" dark="#107c41" mid="#21a366" light="#33c481" /> },
  { run: true, icon: <svg width="26" height="26" viewBox="0 0 26 26"><rect width="24" height="24" y="1" fill="#0078d7" /><circle cx="12" cy="11" r="7" fill="#fff" /><path d="M7 9h4" stroke="#36c5f0" strokeWidth="2" /><path d="M13 6v4" stroke="#2eb67d" strokeWidth="2" /><path d="M10 12v4" stroke="#e01e5a" strokeWidth="2" /><circle cx="18" cy="18" r="6.500" fill="#e0134e" stroke="#222" /><text x="18" y="22" fontSize="10" textAnchor="middle" fill="#fff">1</text></svg> },
  { run: true, icon: <svg width="26" height="25" viewBox="0 0 26 25"><rect x="7" width="16" height="18" fill="#28a8ea" /><path d="M7 9h16v9H7z" fill="#0364b8" /><rect y="4" width="12" height="12" fill="#0078d4" /><text x="6" y="14" textAnchor="middle" fontSize="10" fontWeight="700" fill="#fff">O</text><rect x="11" y="14" width="15" height="11" fill="#e9b06a" /><path d="M11 15l7.500 6 7.500-6" fill="none" stroke="#fff" strokeWidth="1.500" /></svg> },
  { run: true, icon: <svg width="24" height="22" viewBox="0 0 24 22"><path d="M8 1l14 2v17l-3 1z" fill="#8f8b79" /><path d="M8 1l12 2-4 17L1 15z" fill="#8cc9d6" stroke="#eef6f8" /></svg> },
  { run: true, icon: <svg width="22" height="22" viewBox="0 0 22 22"><rect width="22" height="22" rx="4" fill="#b30b00" /><path d="M5 17c-1-2 3-4 6-4.500s6 0 6 1.500-3 1-5-2-2.500-7-1-7 1 4-.5 7S6 18 5 17z" fill="none" stroke="#fff" strokeWidth="1.400" /></svg> },
  { run: true, icon: <svg width="24" height="24" viewBox="0 0 24 24"><ellipse cx="11" cy="13" rx="10.500" ry="9" fill="#c5dff0" stroke="#6f9cbd" /><circle cx="5" cy="13" r="2" fill="#d94a38" /><circle cx="9" cy="8" r="2" fill="#59b53d" /><circle cx="14" cy="8" r="2" fill="#e8ba2b" /><circle cx="8" cy="17" r="2" fill="#3f77c9" /><path d="M22 1L14 23" stroke="#cf8b45" strokeWidth="2.500" /></svg> },
];

function Taskbar() {
  return (
    <div className="flex h-[40px] shrink-0 items-center bg-gradient-to-r from-[#cde6ee] to-[#d6dbea] font-['Open_Sans',sans-serif] text-[#111]">
      <Cell className="w-[48px]"><FaWindows size={16} color="#000" /></Cell>
      <div className="flex h-full w-[344px] items-center border border-[#c3c6c8] bg-white text-[14.200px] text-[#333]">
        <Search size={18} strokeWidth={1.300} className="ml-[11px] -scale-x-100" />
        <span className="ml-[10px]">Suchbegriff hier eingeben</span>
      </div>
      <Cell className="w-[50px]"><svg width="17" height="17" viewBox="0 0 17 17" className="-ml-1"><path d="M1 0v2.500h11V0M1 17v-2.500h11V17M1 5h11v7H1zM15.500 0v5M15.500 9v8" fill="none" stroke="#111" strokeWidth="1.200" /><path d="M14 5.500h3v3h-3z" fill="#111" /></svg></Cell>
      {apps.map((a, i) => (
        <div key={i} className={a.active ? "flex h-full w-[49px] flex-col items-center bg-white/60" : "flex h-full w-[49px] flex-col items-center"}>
          <span className="flex flex-1 items-center pt-[2px]">{a.icon}</span>
          <span className={a.run ? (a.active ? "h-[2px] w-full bg-[#0078d7]" : "h-[2px] w-10 bg-[#0078d7]") : "h-[2px] w-10"} />
        </div>
      ))}
      <div className="ml-auto flex h-full items-center text-[12px]">
        <ChevronUp size={17} strokeWidth={1.600} />
        <svg width="12" height="16" viewBox="0 0 12 16" className="ml-[10px]"><rect x="1" y="3.500" width="7" height="9" rx="2" fill="none" stroke="#111" strokeWidth="1.300" /><path d="M8 7l3-2v6L8 9M2 1q3-1.500 6 0M2 15q3 1.500 6 0" fill="none" stroke="#111" /></svg>
        <svg width="16" height="12" viewBox="0 0 16 12" className="ml-[10px]"><rect x="4" y="3" width="11" height="7" fill="#111" stroke="#111" /><path d="M0 3h4v3H1zM2 6v5M1 0v3M3 0v3" fill="none" stroke="#111" /></svg>
        <Volume2 size={16} strokeWidth={1.400} className="ml-[7px]" />
        <svg width="14" height="13" viewBox="0 0 14 13" className="ml-[10px]"><path d="M1 12Q2 2 13 1M4 12Q5 5 13 4M7 12Q8 8 13 7" fill="none" stroke="#333" strokeWidth="1.100" /><circle cx="11.500" cy="11" r="1.500" fill="#111" /></svg>
        <span className="ml-[12px] w-[22px] text-[11.500px] tracking-[-0.4px]">DEU</span>
        <span className="ml-[10px] w-[58px] text-center text-[11.500px] leading-[18px] tracking-[-0.4px]">17:21<br />23.04.2021</span>
        <div className="relative ml-[17px] h-5 w-[36px]">
          <svg width="16" height="15" viewBox="0 0 16 15"><path d="M0 0h16v12h-8l-3 3v-3H0z" fill="#111" /><path d="M3 3.500h10M3 6h10M3 8.500h7" stroke="#dfe6ef" /></svg>
          <span className="absolute left-[5px] top-[7px] flex h-[18px] w-[20px] items-center justify-center rounded-full border border-[#777] bg-[#d5d8df] text-[12px]">23</span>
        </div>
        <span className="h-full w-[5px] border-l border-[#a9b0bb]" />
      </div>
    </div>
  );
}

export default function App() {
  return (
    <div className="flex h-[1080px] w-[1920px] flex-col overflow-hidden font-['Noto_Sans_CJK_SC','Noto_Sans',sans-serif]">
      <TabStrip />
      <AddressBar />
      <Header />
      <Toolbar />
      <div className="flex h-[830px] shrink-0"><Sidebar /><Canvas /></div>
      <PageBar />
      <Taskbar />
    </div>
  );
}
